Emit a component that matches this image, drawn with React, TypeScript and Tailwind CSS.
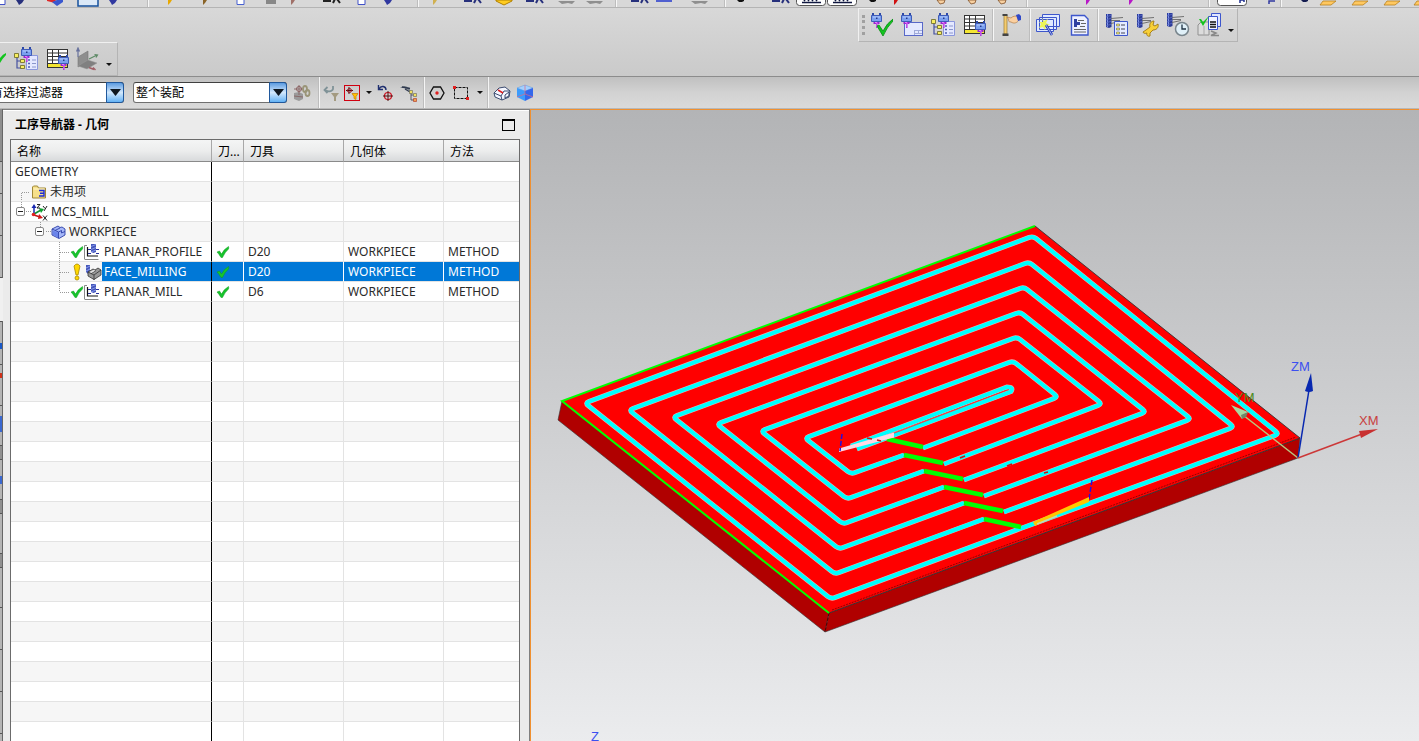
import type { ReactNode } from 'react'
import clsx from 'clsx'

const UI_FONT = 'font-["Noto_Sans","Noto_Sans_CJK_SC",sans-serif]'

// ---------- shared icon parts ----------

function Icon({ size = 24, children }: { size?: number; children: ReactNode }) {
  return (
    <svg width={size} height={size} viewBox={`0 0 ${size} ${size}`} fill="none" aria-hidden="true">
      {children}
    </svg>
  )
}

// Spindle head with the magenta cutter
function Head({ x, y }: { x: number; y: number }) {
  return (
    <g transform={`translate(${x} ${y})`}>
      <path d="M1 0h2v3H1zM8 0h2v3H8z" fill="#2c48a8" />
      <path d="M.5 2.500h10v6H.5z" fill="#7ba0ee" stroke="#3f5cb8" />
      <path d="M2 4h7" stroke="#b8ceff" />
      <path d="M5 4.500h1.500V6H5z" fill="#24388c" />
      <path d="M2.500 9h6v2h-2v4H5v-4H2.500z" fill="#9a28d0" />
      <path d="M4 9.500h2v5" stroke="#e878ff" />
    </g>
  )
}

// Dark blue end mill
function Mill({ x, y }: { x: number; y: number }) {
  return (
    <g transform={`translate(${x} ${y})`}>
      <path d="M0 1h5.500v13L3 15l-3-1z" fill="#2c3c98" />
      <path d="M1.500 1v13" stroke="#7c90e8" />
      <path d="M0 4l5.500-2M0 7l5.500-2M0 10l5.500-2M0 13l5.500-2" stroke="#5a6cc8" strokeWidth="0.800" />
      <path d="M5 5.500l12-1M5 7.500h9M5 10.500l9-2" stroke="#666" strokeWidth="0.900" />
    </g>
  )
}

function Generate() {
  return (
    <Icon>
      <Head x={2} y={0} />
      <path d="M8 13l2-1 4 6q4-8 10-12v2q-6 6-10 15z" fill="#12c51e" stroke="#068a12" strokeWidth="0.800" />
    </Icon>
  )
}

function CreateTool() {
  return (
    <Icon>
      <rect x="4.500" y="9.500" width="18" height="13" fill="#e4e9ff" stroke="#5868c8" />
      <path d="M14 17.500h8M14 20.500h8M14.500 17v5M18.500 17v3" stroke="#a0aad8" />
      <Head x={1} y={0} />
    </Icon>
  )
}

function CreateOperation() {
  return (
    <Icon>
      <path d="M3 10v11h5M3 14h5" stroke="#4550a0" strokeWidth="1.200" />
      <path d="M.5 6.500h4v4h-4zM6.500 12.500h4v3h-4zM6.500 18.500h4v3h-4z" fill="#f7ee60" stroke="#6a6520" strokeWidth="0.800" />
      <path d="M12.500 8.500h11v14h-11z" fill="#e4e8ff" stroke="#8b97dc" />
      <path d="M14 13h2M14 16.500h2M14 20h2" stroke="#5060b0" strokeWidth="1.500" />
      <path d="M18 13h4M18 16.500h4M18 20h4" stroke="#8a96cc" />
      <Head x={7} y={0} />
    </Icon>
  )
}

function ToolTable() {
  return (
    <Icon>
      <path d="M1 2h21v19H1z" fill="#fff" />
      <path d="M1 17h21v4H1z" fill="#f4e632" />
      <path d="M1 2.500h21M1 6h21M1 9.500h21M1 13h21M1 16.500h21M1 20.500h21M1.500 2v19M6.500 2v15M12.500 2v15M21.500 2v19" stroke="#333" />
      <Head x={12} y={8} />
    </Icon>
  )
}

function Simulate() {
  return (
    <Icon>
      <path d="M4 2h3v19H4z" fill="#f4cc70" stroke="#9a7830" strokeWidth="0.700" />
      <path d="M2.500 1h5v2h-5zM2.500 20.500h6V23h-6z" fill="#444" />
      <path d="M7 4l4 1c2-2 4-2 7-2l1 4c-2 3-5 4-8 2-2 0-3-1-2-2z" fill="#fbd0a0" stroke="#b07840" strokeWidth="0.700" />
      <path d="M16 2l3-1 2 2v4l-3 1z" fill="#3048c8" />
    </Icon>
  )
}

function Wizard() {
  return (
    <Icon>
      <path d="M6.500 1.500h17v12h-17zM3.500 4.500h17v12h-17zM.5 6.500h17v12H.5z" fill="#e0eaff" stroke="#3d56cc" />
      <path d="M6 5l2 3 4-2-2 4 4 2-4 1-1 4-2-3-4 1 2-4-2-2h4z" fill="#ecf658" />
      <path d="M10 12l6 10" stroke="#2c40b0" strokeWidth="2.500" />
      <path d="M10 12l6 10" stroke="#9cacf8" />
    </Icon>
  )
}

function ShopDoc() {
  return (
    <Icon>
      <path d="M3.500 2.500h13l3.500 3.500v16H3.500z" fill="#eef1ff" stroke="#3d56cc" strokeWidth="1.400" />
      <path d="M6 6h3v8H6z" fill="#3040a0" />
      <path d="M9 9h3v3H9z" fill="#3040a0" />
      <path d="M10 7.500h6M13 10.500h5M12 13.500h5M6 16.500h12M6 19h12" stroke="#666" />
    </Icon>
  )
}

function MillList() {
  return (
    <Icon>
      <Mill x={2} y={0} />
      <path d="M10.500 8.500h13v14h-13z" fill="#e4ebff" stroke="#3d56cc" />
      <path d="M12.500 11h3v2h-3zM12.500 15h3v2h-3zM12.500 19h3v2h-3z" fill="#f7ee60" stroke="#666" strokeWidth="0.600" />
      <path d="M17 12h4M17 16h4M17 20h4" stroke="#445" />
    </Icon>
  )
}

function MillEdit() {
  return (
    <Icon>
      <Mill x={2} y={0} />
      <path d="M8 19l3-2 4-3c-1-3 1-6 4-6l-1 4 2 1 3-2c1 4-2 6-5 6l-3 3v3c-2 1-4-1-3-3-2 1-4 0-4-1z" fill="#f8d038" stroke="#a07810" strokeWidth="0.900" />
    </Icon>
  )
}

function MillTime() {
  return (
    <Icon>
      <Mill x={1} y={-1} />
      <circle cx="16" cy="16" r="6.500" fill="#e0f0f8" stroke="#78858c" strokeWidth="1.500" />
      <path d="M16 11.500V16h4" stroke="#1c3040" strokeWidth="1.300" />
    </Icon>
  )
}

function PostProcess() {
  return (
    <Icon>
      <path d="M1 12l3-3h8v13H1z" fill="#dcdcdc" stroke="#909090" />
      <path d="M7 13v9" stroke="#aaa" />
      <path d="M14 18l5 2-5 2.500h8" stroke="#888" strokeWidth="1.500" />
      <path d="M14.500 0.500h9v13h-9z" fill="#dfe6ff" stroke="#3d56cc" />
      <path d="M11.500 3.500h9v13h-9z" fill="#f2f4ff" stroke="#3d56cc" />
      <path d="M13 9h6M13 11.500h6M13 14h6" stroke="#111" strokeWidth="1.300" />
      <path d="M2 6l2 0 2 3 6-6-6 10z" fill="#12c51e" />
    </Icon>
  )
}

function CsysGray() {
  return (
    <Icon>
      <path d="M2 10l10-6v10L2 20z" fill="#8e8e8e" stroke="#777" strokeWidth="0.600" />
      <path d="M2 19l10-6 9 3-10 6z" fill="#808080" stroke="#999" strokeWidth="0.500" />
      <path d="M2 10V3M.5 4.500L2 1l1.500 3.500" stroke="#66709c" strokeWidth="1.200" />
      <path d="M13 12l8-4M18.500 7.500l3 .5-1.500 2.500" stroke="#5d8a66" strokeWidth="1.200" />
      <path d="M13 20.500l5 2M17 20.500l2.500 2.500" stroke="#a06068" strokeWidth="1.400" />
    </Icon>
  )
}

// ---------- selection bar icons ----------

function PartLink() {
  return (
    <Icon size={20}>
      <path d="M2 10l5-1 4 2v5l-4 2-5-2z" fill="#9a9a9a" />
      <path d="M7 2v10M2 6h10M2 13l9 1" stroke="#8a6a6a" />
      <circle cx="7" cy="6" r="2.500" stroke="#8a5f5f" />
      <ellipse cx="13" cy="6" rx="2" ry="3" stroke="#9a9578" strokeWidth="1.800" />
      <ellipse cx="15.500" cy="10" rx="2" ry="3" stroke="#9a9578" strokeWidth="1.800" />
    </Icon>
  )
}

function FilterReset() {
  return (
    <Icon size={20}>
      <path d="M3 7c2 2 7 2 8-1V3M5.500 4L2.500 7l3 3" stroke="#7f9297" strokeWidth="1.800" />
      <path d="M9 10h8l-3 4v4h-2v-4z" fill="#a39a80" />
    </Icon>
  )
}

function FilterBox() {
  return (
    <Icon size={20}>
      <rect x="2.500" y="2.500" width="15" height="15" stroke="#d00010" />
      <path d="M7 4v7M4 7.500h7" stroke="#501010" />
      <circle cx="7.500" cy="7.500" r="2" stroke="#a01020" />
      <path d="M10 10.500h6l-2 3v3l-2-1v-2z" fill="#ffc400" stroke="#c87800" strokeWidth="0.700" />
    </Icon>
  )
}

function UndoPoint() {
  return (
    <Icon size={20}>
      <path d="M2.500 2v4.500H7M3 6c2-4 7-3 7 1" stroke="#203070" strokeWidth="1.400" />
      <circle cx="12" cy="13" r="3.500" stroke="#d01020" strokeWidth="1.200" />
      <path d="M12 8v10M7 13h10" stroke="#501010" />
    </Icon>
  )
}

function SelectTree() {
  return (
    <Icon size={20}>
      <path d="M1 5q4-4 9 0l2 4-3-2-3-2z" fill="#7c858c" />
      <path d="M3 4l8 1.500M6 6l5 3" stroke="#303a50" strokeWidth="1.300" />
      <path d="M12 9v8M12 12h3M12 17h3" stroke="#556" />
      <path d="M10.500 7.500h3v3h-3zM14.500 10.500h3v3h-3z" fill="#f0e060" stroke="#665" strokeWidth="0.600" />
      <path d="M14.500 15.500h3v3h-3z" fill="#f0a050" stroke="#b03020" strokeWidth="0.600" />
    </Icon>
  )
}

function HexPoint() {
  return (
    <Icon size={20}>
      <path d="M6.500 4h7l3.500 6-3.500 6h-7L3 10z" stroke="#111" strokeWidth="1.300" />
      <circle cx="10" cy="10" r="1.700" fill="#e02020" />
    </Icon>
  )
}

function RectSelect() {
  return (
    <Icon size={20}>
      <path d="M3.500 4.500h13v11h-13z" stroke="#111" strokeDasharray="3 1" />
      <path d="M2 3h3v3H2zM15 14h3v3h-3z" fill="#e02020" />
    </Icon>
  )
}

function WireCube() {
  return (
    <Icon size={20}>
      <path d="M2 10l5-5 6-1 5 4-1 6-7 3-7-3z" fill="#f4f6ff" stroke="#3c4c70" />
      <path d="M2 10l7 3 3-5 6-0M9 13l1 4M13 12l4-3v4l-4 2z" stroke="#3c4c70" />
      <path d="M6 7l5 3" stroke="#e02020" strokeWidth="1.500" />
    </Icon>
  )
}

function ShadedCube() {
  return (
    <Icon size={20}>
      <path d="M2 5l8-3 8 3-8 3z" fill="#a4d0ff" stroke="#5c98e0" strokeWidth="0.500" />
      <path d="M2 5l8 3v10l-8-4z" fill="#3c9cfc" />
      <path d="M18 5l-8 3v10l8-4z" fill="#3468ec" />
      <path d="M10 2v9l8 3M10 11l-8 3" stroke="#e06880" strokeWidth="0.700" />
    </Icon>
  )
}

// ---------- tree icons ----------

function Tick() {
  return (
    <svg width="14" height="14" viewBox="0 0 14 14" className="shrink-0" aria-hidden="true">
      <path d="M1 7l2.500-1L5.500 9Q8 4 12.500 1.500 13 3 12.500 4 9 7 6.500 12.500L5 12.500Q3 9 1 7z" fill="#16c42c" stroke="#0c9a1c" strokeWidth="0.500" />
    </svg>
  )
}

function Bang() {
  return (
    <svg width="14" height="18" viewBox="0 0 14 18" className="shrink-0" aria-hidden="true">
      <path d="M3 3q3-4 6 0L7 12H5z" fill="#ffd800" stroke="#a88600" strokeWidth="0.800" />
      <circle cx="6" cy="15" r="2" fill="#ffd800" stroke="#a88600" strokeWidth="0.800" />
    </svg>
  )
}

function FolderIcon() {
  return (
    <svg width="16" height="16" viewBox="0 0 16 16" className="shrink-0" aria-hidden="true">
      <path d="M1.500 3l1-1h4l1 2h7v10h-13z" fill="#f6e08a" stroke="#a08838" />
      <path d="M2.500 5h11" stroke="#fff6cc" />
      <path d="M8 6.500h5V12H8M9 9.200h4" stroke="#1c2cd8" strokeWidth="1.400" fill="none" />
    </svg>
  )
}

function McsIcon() {
  return (
    <svg width="18" height="18" viewBox="0 0 18 18" className="shrink-0" fill="none" aria-hidden="true">
      <path d="M3 12V4" stroke="#1828b0" strokeWidth="1.500" />
      <path d="M.5 5L3 1l2.500 4z" fill="#1828b0" />
      <path d="M3 11l7-4" stroke="#109030" strokeWidth="1.500" />
      <path d="M8 5l5 1-3 4z" fill="#10a030" />
      <path d="M3 12l6 2" stroke="#c01818" strokeWidth="1.500" />
      <path d="M8 11l4 4-5 1z" fill="#d01818" />
      <circle cx="2.500" cy="11.500" r="1.800" fill="#e02020" />
      <path d="M6 1.500h3L6 5h3M12 3l2 2.500M16 3l-3 5M12 12.500l4 5M16 12.500l-4 5" stroke="#222" />
    </svg>
  )
}

function WorkpieceIcon() {
  return (
    <svg width="16" height="16" viewBox="0 0 16 16" className="shrink-0" aria-hidden="true">
      <path d="M1 5l6-3 2 1.500L11 3l3 2v6l-6 3.500L1 11z" fill="#a4b6f8" stroke="#2c40a8" strokeWidth="0.900" />
      <path d="M2 6.500l5 2v5l-5-2.500z" fill="#6a84ea" />
      <path d="M1 5l6.500 3v6M7.500 8l3-1.500V9l3.500-1.500M4 6.500l5-2.500" stroke="#2c40a8" strokeWidth="0.900" fill="none" />
    </svg>
  )
}

function PlanarIcon() {
  return (
    <svg width="17" height="18" viewBox="0 0 17 18" className="shrink-0" fill="none" aria-hidden="true">
      <path d="M1 2h3v11h12v3H1z" fill="#fff" />
      <path d="M.5 16V2.500H3M.5 16.500h14" stroke="#888" />
      <path d="M3.500 4v9H14" stroke="#111" strokeWidth="1.200" />
      <path d="M7 1h5v8l-2.500 1L7 9z" fill="#4456b8" />
      <path d="M7 3.500l5-2M7 6.500l5-2M7 9l5-2" stroke="#a0b0ff" strokeWidth="0.700" />
      <path d="M4 6.500h3M4 10.500h3M12 6.500h3M12 10.500h3" stroke="#2830a0" />
    </svg>
  )
}

function FaceIcon() {
  return (
    <svg width="17" height="18" viewBox="0 0 17 18" className="shrink-0" aria-hidden="true">
      <path d="M1 2h4v7l-2 2-2-2z" fill="#4456b8" />
      <path d="M1 5l4-2M1 8l4-2" stroke="#a0b0ff" strokeWidth="0.800" />
      <path d="M3 9l5-3 2 1 3-2 3 2v5l-7 4.500L3 13z" fill="#999" stroke="#333" strokeWidth="0.800" />
      <path d="M3 9l6 3v5M9 12l7-5M6 10.500l5-3" stroke="#333" strokeWidth="0.800" fill="none" />
      <path d="M4.500 9l4-2 2 .500-4 2.500z" fill="#e4e4e4" />
    </svg>
  )
}

// ---------- toolbars ----------

function Tool({ label, className, children }: { label: string; className?: string; children: ReactNode }) {
  return (
    <button type="button" aria-label={label} className={clsx('flex shrink-0 items-center justify-center', className ?? 'w-[31px]')}>
      {children}
    </button>
  )
}

function Sep() {
  return <span className="mx-px w-0.5 shrink-0 self-stretch border-r border-l border-r-white/80 border-l-[#bdbdbd]" />
}

function More({ className }: { className?: string }) {
  return (
    <button type="button" aria-label="更多" className={clsx('flex shrink-0 items-center justify-center', className)}>
      <svg width="6" height="4" viewBox="0 0 6 4" aria-hidden="true">
        <path d="M0 0h6L3 3z" fill="#111" />
      </svg>
    </button>
  )
}

type Cut = [width: number, kind: string, color?: string]

// Lower edge of the standard toolbar that scrolls out above the window
const CUT_TOOLS: Cut[] = [
  [4, 'doc', '#4050c8'], [32, 'blob', '#27307c'], [38, 'cube'], [28, 'press'], [22, 'blob', '#3038a0'], [22, 'none'],
  [4, 'sep'], [40, 'tip', '#e8a800'], [30, 'tip', '#8a6428'], [42, 'doc', '#4860d0'], [18, 'box', '#888'],
  [26, 'tip', '#a07068'], [52, 'legs', '#222'], [8, 'doc', '#4050c8'], [44, 'blob', '#3038a0'], [6, 'none'],
  [4, 'sep'], [30, 'tip', '#d0b050'], [46, 'legs', '#27307c'], [16, 'gem'], [46, 'legs', '#27307c'],
  [18, 'gray'], [38, 'gray'], [4, 'sep'], [44, 'legs', '#27307c'], [4, 'line', '#5060d0'],
  [24, 'none'], [20, 'gray'], [13, 'none'], [4, 'sep'], [28, 'dash', '#111'], [52, 'legs', '#27307c'],
  [8, 'toggle'], [54, 'toggle'], [8, 'dash', '#111'], [38, 'tip', '#d01010'], [50, 'hand'], [12, 'hand'], [48, 'hand'],
  [4, 'sep'], [44, 'none'], [30, 'tip', '#b818c8'], [56, 'tip', '#b818c8'], [48, 'none'],
  [4, 'sep'], [42, 'field'], [26, 'flag', '#3038a0'], [4, 'sep'], [44, 'dash', '#141c50'],
  [2, 'folder'], [62, 'folder'], [2, 'folder'], [58, 'folder'],
]

function CutIcon({ kind, color, c }: { kind: string; color?: string; c: number }) {
  switch (kind) {
    case 'doc':
      return <path d={`M${c - 4} -2h7v6.500h-7z`} fill="#fff" stroke={color} />
    case 'press':
      return <path d={`M${c - 10} -2h20v8h-20z`} fill="#dbe9f8" stroke="#16509c" strokeWidth="1.500" />
    case 'blob':
      return <path d={`M${c - 4} 0h8l-2 3-3 2-1-2z`} fill={color} />
    case 'cube':
      return (
        <>
          <path d={`M${c - 8} 0h8l3 2-3 1-8-2z`} fill="#e02828" />
          <path d={`M${c - 3} 2l5 4 6-4V0h-6z`} fill="#3a58d0" />
        </>
      )
    case 'tip':
      return <path d={`M${c - 2} 0h4l-2 3-2 2z`} fill={color} />
    case 'box':
      return <path d={`M${c - 5} 0h10v4h-10z`} fill={color} />
    case 'dash':
      return <path d={`M${c - 4} 0h7v1l-2 1h-3z`} fill={color} />
    case 'legs':
      return <path d={`M${c - 9} 1h8M${c + 1} 3l2-4M${c + 5} -1l3 4`} stroke={color} strokeWidth="2" fill="none" />
    case 'gem':
      return <path d={`M${c - 8} 0h16v1l-8 4-8-4z`} fill="#ffcc20" stroke="#b08000" />
    case 'gray':
      return <path d={`M${c - 9} 1h17l-3 3-4-1-6 1z`} fill="#8f8f8f" />
    case 'line':
      return <path d={`M${c - 8} 1h16`} stroke={color} strokeWidth="2" />
    case 'toggle':
      return (
        <>
          <rect x={c - 14.5} y="-6" width="29" height="11.500" rx="3" fill="#fff" stroke="#555" />
          <path d={`M${c - 9} 2.500h19M${c - 7} 1l3-4M${c - 3} 1l3-4M${c + 1} 1l3-4M${c + 5} 1l3-4`} stroke="#101840" strokeWidth="1.500" />
        </>
      )
    case 'field':
      return (
        <>
          <rect x={c - 14.5} y="-6" width="29" height="11.500" rx="3" fill="#fff" stroke="#555" />
          <path d={`M${c + 8} 3V0h4v2`} stroke="#203090" strokeWidth="1.500" />
        </>
      )
    case 'flag':
      return <path d={`M${c + 3} 4V1h6`} stroke={color} strokeWidth="1.500" />
    case 'hand':
      return <path d={`M${c - 3} 0l3 4 4-1 1-3z`} fill="#f8d0a0" stroke="#805028" strokeWidth="0.800" />
    case 'folder':
      return <path d={`M${c - 8} 5l3-4h13l-5 4z`} fill="#ffc860" stroke="#b88020" strokeWidth="0.800" />
    default:
      return null
  }
}

function CutToolbar() {
  return (
    <div className="flex h-2 shrink-0 overflow-hidden border-b border-[#b4b4b4] bg-[#d8d8d8]">
      {CUT_TOOLS.map(([width, kind, color], i) =>
        kind === 'sep' ? (
          <Sep key={i} />
        ) : (
          <svg key={i} width={width} height="7" fill="none" className="shrink-0 overflow-visible" aria-hidden="true">
            <CutIcon kind={kind} color={color} c={width / 2} />
          </svg>
        ),
      )}
    </div>
  )
}

const BOX = 'flex h-[34px] border border-t-[#f0f0f0] border-r-[#b4b4b4] border-b-[#b4b4b4] border-l-[#f0f0f0]'

function ToolbarArea() {
  return (
    <div className="shrink-0 border-b border-[#8c8c8c] bg-linear-to-b from-[#d8d8d8] to-[#cacaca]">
      <div className="flex justify-end pr-[181px]">
        <div className={BOX}>
          <span className="my-1.5 ml-[3px] w-[3px] border-r-[3px] border-dotted border-[#a0a0a0]" />
          <Tool label="生成刀轨"><Generate /></Tool>
          <Tool label="创建刀具"><CreateTool /></Tool>
          <Tool label="创建工序"><CreateOperation /></Tool>
          <Tool label="刀具表" className="w-[33px]"><ToolTable /></Tool>
          <Sep />
          <Tool label="确认刀轨" className="w-[33px]"><Simulate /></Tool>
          <Sep />
          <Tool label="向导"><Wizard /></Tool>
          <Tool label="车间文档" className="w-[33px]"><ShopDoc /></Tool>
          <Sep />
          <Tool label="刀轨列表"><MillList /></Tool>
          <Tool label="编辑刀轨"><MillEdit /></Tool>
          <Tool label="加工时间"><MillTime /></Tool>
          <Tool label="后处理"><PostProcess /></Tool>
          <More className="w-[13px] pt-3" />
        </div>
      </div>
      <div className="flex">
        <div className={clsx(BOX, 'border-l-0')}>
          <Tool label="生成" className="w-2.5">
            <svg width="10" height="24" viewBox="0 0 10 24" aria-hidden="true">
              <path d="M0 11q3-4 6-5v2q-3 3-6 8z" fill="#12c51e" />
            </svg>
          </Tool>
          <Tool label="创建工序"><CreateOperation /></Tool>
          <Tool label="刀具表" className="w-[33px]"><ToolTable /></Tool>
          <Tool label="坐标系" className="w-[27px]"><CsysGray /></Tool>
          <More className="w-4 pt-3" />
        </div>
      </div>
    </div>
  )
}

function Combo({ label, value, className }: { label: string; value: string; className?: string }) {
  return (
    <div className={clsx('relative shrink-0', className)}>
      <select
        aria-label={label}
        className="block h-[21px] w-full appearance-none rounded-[3px] border border-[#707070] border-t-[#404040] bg-white pl-0.5 text-[12px] leading-[18px] text-black"
      >
        <option>{value}</option>
      </select>
      <span className="pointer-events-none absolute inset-y-0 right-0 flex w-[18px] items-center justify-center rounded-r-[3px] border border-[#20589c] bg-linear-to-b from-[#5b9be0] via-[#d2e8fc] to-[#62b2f4]">
        <svg width="11" height="7" viewBox="0 0 11 7" aria-hidden="true">
          <path d="M0 0h11L5.500 7z" fill="#101820" />
        </svg>
      </span>
    </div>
  )
}

function SelectionBar() {
  return (
    <div className="flex h-8 shrink-0 items-center border-b border-[#b8b8b8] bg-linear-to-b from-[#c0c0c0] via-[#d2d2d2] to-[#dadada]">
      <Combo label="选择过滤器" value="没有选择过滤器" className="-ml-6 w-[148px]" />
      <Combo label="选择范围" value="整个装配" className="ml-[9px] w-[154px]" />
      <Tool label="部件间链接" className="w-[30px]"><PartLink /></Tool>
      <Sep />
      <Tool label="重置过滤器" className="w-[21px]"><FilterReset /></Tool>
      <Tool label="选择过滤" className="w-5"><FilterBox /></Tool>
      <More className="w-3.5" />
      <Tool label="撤消点" className="w-5"><UndoPoint /></Tool>
      <Tool label="选择树" className="w-[26px]"><SelectTree /></Tool>
      <Sep />
      <Tool label="捕捉点" className="w-[22px]"><HexPoint /></Tool>
      <Tool label="矩形选择" className="w-[26px]"><RectSelect /></Tool>
      <More className="w-3" />
      <Sep />
      <Tool label="线框" className="w-6"><WireCube /></Tool>
      <Tool label="着色" className="w-[22px]"><ShadedCube /></Tool>
    </div>
  )
}

// ---------- operation navigator ----------

interface Row {
  name: string
  tree?: ReactNode
  tool?: string
  ticked?: boolean
  selected?: boolean
}

const DOTS = { stroke: '#999', strokeDasharray: '1 1' }

function Toggle({ x }: { x: number }) {
  return (
    <>
      <rect x={x + 0.5} y="5.500" width="8" height="8" rx="1.500" fill="#fff" stroke="#888" />
      <path d={`M${x + 2} 9.500h5`} stroke="#222" />
    </>
  )
}

function Guide({ width, children }: { width: number; children?: ReactNode }) {
  return (
    <svg width={width} height="20" viewBox={`0 0 ${width} 20`} className="shrink-0" fill="none" aria-hidden="true">
      {children}
    </svg>
  )
}

const ROWS: Row[] = [
  { name: 'GEOMETRY', tree: <Guide width={2} /> },
  {
    name: '未用项',
    tree: (
      <>
        <Guide width={20}><path d="M10.500 20V10.500H19" {...DOTS} /></Guide>
        <FolderIcon />
        <Guide width={1} />
      </>
    ),
  },
  {
    name: 'MCS_MILL',
    tree: (
      <>
        <Guide width={20}><path d="M10.500 0v5M15 9.500h5" {...DOTS} /><Toggle x={5} /></Guide>
        <McsIcon />
      </>
    ),
  },
  {
    name: 'WORKPIECE',
    tree: (
      <>
        <Guide width={40}><path d="M29.500 0v5M35 9.500h5" {...DOTS} /><Toggle x={24} /></Guide>
        <WorkpieceIcon />
      </>
    ),
  },
  {
    name: 'PLANAR_PROFILE',
    tool: 'D20',
    ticked: true,
    tree: (
      <>
        <Guide width={59}><path d="M48.500 0v20M49 10.500h9" {...DOTS} /></Guide>
        <Tick />
        <PlanarIcon />
        <Guide width={1} />
      </>
    ),
  },
  {
    name: 'FACE_MILLING',
    tool: 'D20',
    ticked: true,
    selected: true,
    tree: (
      <>
        <Guide width={60}><path d="M48.500 0v20M49 10.500h9" {...DOTS} /></Guide>
        <Bang />
        <FaceIcon />
      </>
    ),
  },
  {
    name: 'PLANAR_MILL',
    tool: 'D6',
    ticked: true,
    tree: (
      <>
        <Guide width={59}><path d="M48.500 0v10M49 10.500h9" {...DOTS} /></Guide>
        <Tick />
        <PlanarIcon />
        <Guide width={1} />
      </>
    ),
  },
]

const EMPTY_ROWS = 24

const CELL = 'h-5 border-b border-[#e3e3e3] p-0'

function DataRow({ row, odd }: { row?: Row; odd: boolean }) {
  const selected = row?.selected
  const cell = clsx(CELL, 'border-r pl-1 last:border-r-0', selected && 'border-r-white bg-[#0078d7] text-white')
  return (
    <tr className={odd ? 'bg-[#f6f6f6]' : 'bg-white'}>
      <td className={clsx(CELL, 'border-r border-r-black')}>
        {row && (
          <div className="flex h-[19px] items-center overflow-hidden whitespace-nowrap">
            {row.tree}
            <span className={clsx('h-[19px] pl-0.5 leading-5', selected && 'flex-1 bg-[#0078d7] text-white')}>{row.name}</span>
          </div>
        )}
      </td>
      <td className={cell}>{row?.ticked && <Tick />}</td>
      <td className={cell}>{row?.tool}</td>
      <td className={cell}>{row?.tool && 'WORKPIECE'}</td>
      <td className={cell}>{row?.tool && 'METHOD'}</td>
    </tr>
  )
}

function Navigator() {
  return (
    <section className="flex w-[527px] shrink-0 flex-col border-t border-r border-[#808080] bg-[#ebebeb]">
      <header className="flex h-[29px] shrink-0 items-center justify-between border-t border-white pr-3.5 pl-3">
        <h2 className="text-[12px] leading-4 font-bold text-black">工序导航器 - 几何</h2>
        <button type="button" aria-label="最大化" className="h-3 w-[13px] border border-t-2 border-black" />
      </header>
      <div className="mr-[9px] ml-[7px] min-h-0 flex-1 overflow-hidden border border-b-0 border-[#6b6b6b] bg-white">
        <table className="w-full table-fixed border-separate border-spacing-0 text-[12px] leading-[18px] text-[#2a2a2a]">
          <colgroup>
            <col className="w-[201px]" />
            <col className="w-8" />
            <col className="w-[100px]" />
            <col className="w-[100px]" />
            <col />
          </colgroup>
          <thead>
            <tr className="bg-linear-to-b from-[#f4f5f5] via-[#eceded] to-[#d6d8da]">
              {['名称', '刀...', '刀具', '几何体', '方法'].map((title) => (
                <th
                  key={title}
                  className="h-[22px] border-r border-b border-r-[#a8a8a8] border-b-[#8a8a8a] p-0 pt-0.5 pl-1.5 text-left font-normal text-black last:border-r-0"
                >
                  {title}
                </th>
              ))}
            </tr>
          </thead>
          <tbody>
            {ROWS.map((row, i) => (
              <DataRow key={row.name} row={row} odd={i % 2 === 1} />
            ))}
            {Array.from({ length: EMPTY_ROWS }, (_, i) => (
              <DataRow key={i} odd={(ROWS.length + i) % 2 === 1} />
            ))}
          </tbody>
        </table>
      </div>
    </section>
  )
}

// Sliver of the resource bar at the window's left edge
function ResourceBar() {
  return (
    <nav className="flex w-[3px] shrink-0 flex-col border-r border-[#666] bg-[#b4b4b4]">
      <span className="h-[53px] border-b border-[#555] bg-[#8e8e8e]" />
      <span className="h-8 border-b border-[#555]" />
      <span className="h-[42px] border-b border-[#555]" />
      <span className="h-[42px] border-b border-[#555]" />
      <span className="-mr-px h-[43px] bg-[#f0f0f0]" />
      <span className="h-[22px] border-t border-[#555]" />
      <span className="h-1.5 bg-[#1858c8]" />
      <span className="h-4 border-b border-[#555]" />
      <span className="mt-2 h-[5px] bg-[#d03018]" />
      <span className="h-7 border-b border-[#555]" />
      <span className="mt-2.5 h-4 bg-[#3a68d0]" />
      <span className="h-3.5 border-b border-[#555]" />
      <span className="h-3.5 border-b border-[#555] bg-[#909090]" />
      <span className="mt-4 h-2 bg-[#3a68d0]" />
      <span className="h-4 border-b border-[#555]" />
      <span className="h-3.5 border-b border-[#555] bg-[#909090]" />
      <span className="h-10 border-b border-[#555]" />
      <span className="h-3.5 border-b border-[#555] bg-[#909090]" />
      <span className="h-10 border-b border-[#555]" />
      <span className="h-[42px] border-b border-[#555]" />
      <span className="h-[42px] border-b border-[#555]" />
      <span className="h-[42px] border-b border-[#555]" />
    </nav>
  )
}

// ---------- graphics window ----------

type Pt = [number, number]

// step-over end, lower, left, top and right corners, next step-over
const PASSES: Pt[][] = [
  [[984, 519], [835, 574], [629, 410], [1029, 262], [1234, 427], [1004, 512]],
  [[964, 503], [839, 549], [673, 417], [1024, 287], [1191, 419], [984, 496]],
  [[944, 487], [843, 524], [717, 424], [1020, 312], [1146, 412], [964, 480]],
  [[924, 471], [847, 499], [761, 431], [1017, 337], [1102, 404], [944, 464]],
  [[904, 455], [851, 474], [805, 438], [1013, 361], [1058, 397], [923, 448]],
]

const OUTER: Pt[] = [[1022, 528], [831, 599], [585, 403], [1033, 236], [1279, 434], [1022, 528]]

const STEPS: [Pt, Pt][] = [
  [[887, 439], [923, 447]],
  [[904, 455], [943, 463]],
  [[924, 471], [963, 479]],
  [[944, 487], [983, 495]],
  [[964, 503], [1003, 511]],
  [[984, 519], [1021, 527]],
]

// Polyline with every inner corner rounded off
function roundedPath(points: Pt[], r = 4) {
  const toward = (from: Pt, to: Pt) => {
    const d = Math.hypot(to[0] - from[0], to[1] - from[1])
    return `${from[0] + ((to[0] - from[0]) * r) / d} ${from[1] + ((to[1] - from[1]) * r) / d}`
  }
  let d = `M${points[0].join(' ')}`
  for (let i = 1; i < points.length - 1; i++) {
    d += `L${toward(points[i], points[i - 1])}Q${points[i].join(' ')} ${toward(points[i], points[i + 1])}`
  }
  return `${d}L${points[points.length - 1].join(' ')}`
}

const CUTS = [
  roundedPath(OUTER),
  ...PASSES.map((p) => roundedPath(p)),
  'M851 446L1007 387Q1014 387 1011 391.500L857 449',
]

function Viewport() {
  return (
    <main className="min-w-0 flex-1 overflow-hidden border-t border-l border-[#f09030] bg-linear-to-b from-[#b3b4b6] to-[#ebecee]">
      <svg width="888" height="631" viewBox="531 110 888 631" fill="none" className="block font-['Liberation_Sans',sans-serif]">
        <title>刀轨</title>
        <path d="M562 401L829 613 825 632 558 420z" fill="#b00000" stroke="#333" strokeWidth="0.600" />
        <path d="M829 613L1300 438 1298 458 825 632z" fill="#b00000" stroke="#333" strokeWidth="0.600" />
        <path d="M562 401L1035 226 1300 438 829 613z" fill="#f00" />
        <path d="M1035 226L1300 438M829 613L1300 438" stroke="#333" strokeWidth="0.900" />
        <path d="M832 610L1296 437" stroke="#600" strokeWidth="0.700" strokeDasharray="2 1" />
        <path d="M829 613l-4 19" stroke="#500000" strokeDasharray="3 2" />
        <path d="M1035 226L562 401 829 613" stroke="#0f0" strokeWidth="2" />

        {CUTS.map((d) => (
          <path key={d} d={d} stroke="#e8b0b0" strokeWidth="5" />
        ))}
        {CUTS.map((d) => (
          <path key={d} d={d} stroke="#0ff" strokeWidth="4" />
        ))}
        <path d="M880 438.500L1009 389.500" stroke="#d04848" strokeWidth="0.900" />
        {STEPS.map(([a, b]) => (
          <path key={a.join()} d={`M${a.join(' ')}L${b.join(' ')}`} stroke="#0f0" strokeWidth="4.500" />
        ))}
        <path d="M839 448.500l55-16v5l-34 9-21 5.500z" fill="#ffd8e4" />
        <path d="M867 438l5 1M877 440l4 1M960 458l5-2M1007 466l5-2M1044 473l4-1" stroke="#d01010" strokeWidth="1.500" />
        <path d="M842 434l-2 17M1092 480l-3 19" stroke="#2010e0" strokeWidth="1.500" strokeDasharray="5 2" />
        <path d="M1033 522l56-25v5l-32 13-22 11z" fill="#ffc800" />
        <path d="M1037 524l20-8" stroke="#c8d8b0" strokeWidth="1.500" />

        <path d="M1298 458L1243 415" stroke="#b8c880" strokeWidth="1.500" />
        <path d="M1231 405l17 7-6 7z" fill="#a8d8a0" />
        <path d="M1248 412l-2 5-4 2-1-4z" fill="#708868" />
        <path d="M1298 458L1309 390" stroke="#0828b0" strokeWidth="1.500" />
        <path d="M1311 373l2 18q-4 2-8 0z" fill="#0828b0" />
        <path d="M1298 458L1362 434" stroke="#cc3838" strokeWidth="1.500" />
        <path d="M1378 429l-19 2 2 7z" fill="#c83030" />
        <g fontSize="13">
          <text x="1235" y="402" fill="#4a8a20">YM</text>
          <text x="1291" y="371" fill="#3c50f0">ZM</text>
          <text x="1359" y="425" fill="#c84040">XM</text>
          <text x="591" y="741" fill="#3c50f0">Z</text>
        </g>
      </svg>
    </main>
  )
}

export default function App() {
  return (
    <div className={clsx('flex h-screen flex-col overflow-hidden bg-[#d6d6d6]', UI_FONT)}>
      <CutToolbar />
      <ToolbarArea />
      <SelectionBar />
      <div className="flex min-h-0 flex-1">
        <ResourceBar />
        <Navigator />
        <Viewport />
      </div>
    </div>
  )
}
